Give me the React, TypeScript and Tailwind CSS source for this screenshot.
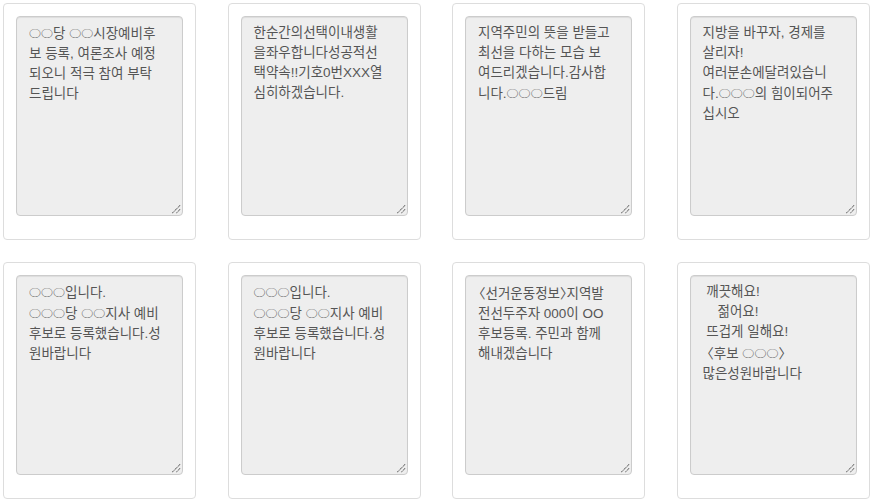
import React from "react";

// Candidate message templates shown as read-only text boxes.
const messages: string[] = [
  "○○당 ○○시장예비후\n보 등록, 여론조사 예정\n되오니 적극 참여 부탁\n드립니다",
  "한순간의선택이내생활\n을좌우합니다성공적선\n택약속!!기호0번XXX열\n심히하겠습니다.",
  "지역주민의 뜻을 받들고\n최선을 다하는 모습 보\n여드리겠습니다.감사합\n니다.○○○드림",
  "지방을 바꾸자, 경제를\n살리자!\n여러분손에달려있습니\n다.○○○의 힘이되어주\n십시오",
  "○○○입니다.\n○○○당 ○○지사 예비\n후보로 등록했습니다.성\n원바랍니다",
  "○○○입니다.\n○○○당 ○○지사 예비\n후보로 등록했습니다.성\n원바랍니다",
  "〈선거운동정보〉지역발\n전선두주자 000이 OO\n후보등록. 주민과 함께\n해내겠습니다",
  " 깨끗해요!\n    젊어요!\n 뜨겁게 일해요!\n 〈후보 ○○○〉\n많은성원바랍니다",
];

// Full-width symbols, trimmed so they sit like the proportional body text.
function Symbol({ ch }: { ch: string }) {
  if (ch === "○") {
    return (
      <span className="inline-block scale-y-[0.8] text-[12px] [font-family:'Noto_Sans_CJK_KR',sans-serif]">
        ○
      </span>
    );
  }
  if (ch === "〈") {
    return (
      <span className="-ml-[6px] [font-family:'Noto_Sans_CJK_KR',sans-serif]">
        〈
      </span>
    );
  }
  return (
    <span className="-mr-[7px] [font-family:'Noto_Sans_CJK_KR',sans-serif]">
      〉
    </span>
  );
}

function MessageText({ text }: { text: string }) {
  const parts: React.ReactNode[] = [];
  let run = "";
  [...text].forEach((ch, i) => {
    if (ch === "○" || ch === "〈" || ch === "〉") {
      if (run) parts.push(run);
      run = "";
      parts.push(<Symbol key={i} ch={ch} />);
    } else {
      run += ch;
    }
  });
  if (run) parts.push(run);
  return <>{parts}</>;
}

function ResizeGrip() {
  return (
    <svg
      className="absolute right-[1px] bottom-[1px]"
      width="11"
      height="11"
      viewBox="0 0 11 11"
    >
      <path d="M10 2 L2 10" stroke="#5f5f5f" strokeWidth="1" strokeDasharray="1 1" />
      <path d="M10.5 2.5 L2.5 10.5" stroke="#b5b5b5" strokeWidth="1" />
      <path d="M10 6 L6 10" stroke="#5f5f5f" strokeWidth="1" strokeDasharray="1 1" />
      <path d="M10.5 6.5 L6.5 10.5" stroke="#b5b5b5" strokeWidth="1" />
    </svg>
  );
}

function MessageCard({ text }: { text: string }) {
  return (
    <div className="rounded-[4px] border border-[#dddddd] bg-white px-[12px] pt-[12px] pb-[23px]">
      <div className="relative h-[200px] overflow-hidden whitespace-pre rounded-[4px] border border-[#cccccc] bg-[#eeeeee] px-[12px] py-[6px] text-[13.5px] leading-[20px] text-[#555555] shadow-[inset_0_1px_1px_rgba(0,0,0,0.075)] [font-family:'Liberation_Sans','Noto_Sans_CJK_KR',sans-serif]">
        <MessageText text={text} />
        <ResizeGrip />
      </div>
    </div>
  );
}

export default function App() {
  return (
    <div className="min-h-[504px] w-[876px] bg-white pt-[3px] pl-[3px]">
      <div className="grid grid-cols-[repeat(4,193px)] gap-x-[31.5px] gap-y-[21.5px]">
        {messages.map((m, i) => (
          <MessageCard key={i} text={m} />
        ))}
      </div>
    </div>
  );
}
